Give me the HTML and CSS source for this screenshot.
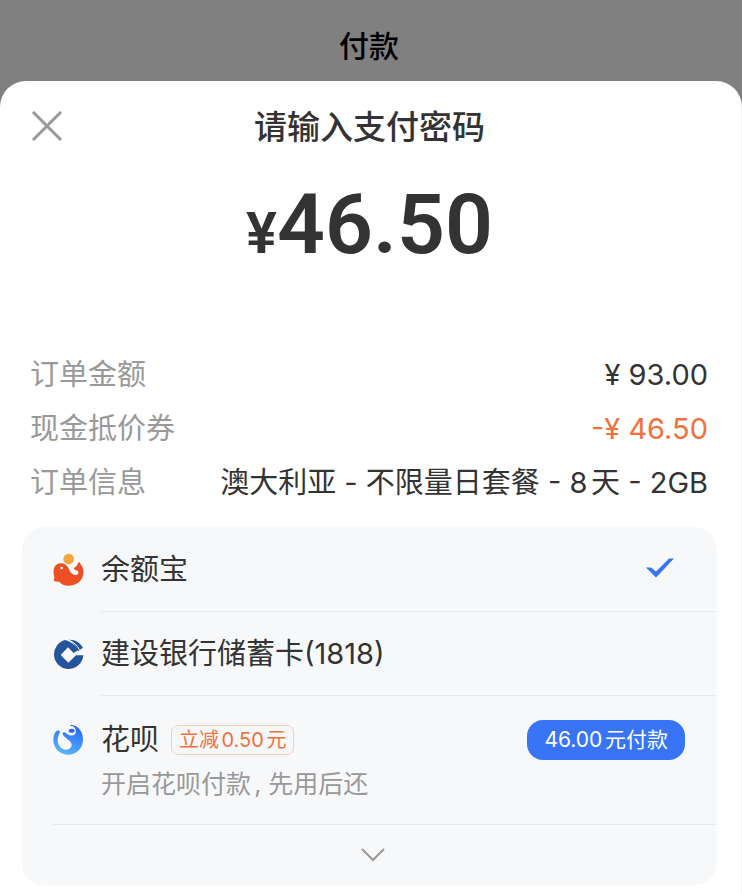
FILE: index.html
```html
<!DOCTYPE html>
<html lang="zh-CN">
<head>
    <title>付款</title>
    <meta charset="UTF-8" />
    <meta name="viewport" content="width=device-width, initial-scale=1">
    <link rel="stylesheet" href="styles.css">
</head>
<body>
    <header class="page-header">付款</header>

    <main class="sheet">
        <div class="sheet-header">
            <button class="close" type="button" aria-label="关闭">
                <svg width="32" height="32" viewBox="0 0 32 32">
                    <path d="M2 1L30 29M30 1L2 29" fill="none" stroke="#999" stroke-width="3"/>
                </svg>
            </button>
            <h1>请输入支付密码</h1>
        </div>

        <div class="amount"><span class="currency">¥</span>46.50</div>

        <dl class="details">
            <div class="detail">
                <dt>订单金额</dt>
                <dd>¥ 93.00</dd>
            </div>
            <div class="detail">
                <dt>现金抵价券</dt>
                <dd class="discount">-¥ 46.50</dd>
            </div>
            <div class="detail">
                <dt>订单信息</dt>
                <dd>澳大利亚 - 不限量日套餐 - 8天 - 2GB</dd>
            </div>
        </dl>

        <section class="methods">
            <div class="method">
                <svg class="logo" viewBox="39 24 96 102">
                    <circle cx="86" cy="42" r="16" fill="#f4a63a"/>
                    <path d="M42 70C46 57 58 53 70 56C83 60 86 70 90 79C95 89 108 94 114 87C118 81 113 76 106 75C100 73 101 68 106 66C112 63 112 56 117 51C121 52 121 59 125 62C130 68 131 77 130 87C128 108 109 122 86 122C73 122 63 117 57 110C50 111 44 110 41 106C43 102 43 99 43 96C40 87 40 78 42 70Z" fill="#ec4f24"/>
                    <circle cx="65" cy="69" r="4" fill="#fff"/>
                </svg>
                <div class="method-body">
                    <span class="method-name">余额宝</span>
                    <svg class="check" width="28" height="20" viewBox="0 0 28 20">
                        <path d="M0 9.500H5L10 13.500L23 0.500H28L10 19.500Z" fill="#3875f6"/>
                    </svg>
                </div>
            </div>

            <div class="method">
                <svg class="logo" viewBox="39 22 96 102">
                    <path d="M76 31A44 44 0 1 0 130 77H108L85 99L62 76L84 53L101 70L116 60C106 46 92 36 76 31Z" fill="#24549c"/>
                    <path d="M85 30C106 29 122 40 129 54L114 64C108 48 99 36 85 30Z" fill="#24549c"/>
                    <path d="M86 31C101 37 111 46 118 60" fill="none" stroke="#f7f8fa" stroke-width="3"/>
                </svg>
                <div class="method-body">
                    <span class="method-name">建设银行储蓄卡(1818)</span>
                </div>
            </div>

            <div class="method method-offer">
                <svg class="logo" viewBox="39 39 96 102">
                    <defs>
                        <linearGradient id="huabei" x1="0.700" y1="0" x2="0.400" y2="1">
                            <stop offset="0" stop-color="#2864f5"/>
                            <stop offset="1" stop-color="#57b5fb"/>
                        </linearGradient>
                    </defs>
                    <path d="M92 44C116 46 130 66 129 90C128 116 109 134 85 134C60 134 40 115 40 90C40 80 42 72 47 65C51 60 60 61 60 67C54 77 52 86 54 98C58 113 68 120 81 119C92 117 97 109 94 100C90 90 73 84 68 73C65 66 74 64 79 70C85 77 96 79 103 74C110 69 109 56 101 50C98 48 94 48 91 47Z" fill="url(#huabei)"/>
                    <ellipse cx="95" cy="62" rx="9" ry="6" fill="#2b68f5"/>
                </svg>
                <div class="method-body">
                    <div class="offer">
                        <div class="offer-title">
                            <span class="method-name">花呗</span>
                            <span class="tag">立减0.50元</span>
                        </div>
                        <p class="offer-note">开启花呗付款, 先用后还</p>
                    </div>
                    <button class="pay" type="button">46.00元付款</button>
                </div>
            </div>

            <button class="more" type="button" aria-label="更多付款方式">
                <svg width="24" height="14" viewBox="0 0 24 14">
                    <path d="M1 1L12 12L23 1" fill="none" stroke="#999" stroke-width="2"/>
                </svg>
            </button>
        </section>
    </main>
</body>
</html>
```
FILE: styles.css
```css
* {
    box-sizing: border-box;
}

body {
    margin: 0;
    min-height: 100vh;
    display: flex;
    flex-direction: column;
    background: #808080;
    color: #333;
    font-family: Inter, "Noto Sans CJK SC", sans-serif;
    font-size: 29px;
    line-height: 40px;
    text-autospace: normal;
}

button {
    border: none;
    background: none;
    padding: 0;
    font: inherit;
    cursor: pointer;
}

svg {
    display: block;
}

.page-header {
    padding: 26px 4px 15px 0;
    color: #000;
    font-size: 30px;
    font-weight: 500;
    text-align: center;
}

.sheet {
    flex: 1;
    padding: 24px 24px 8px 22px;
    background: #fff;
    border-right: 1px solid #f4f4f4;
    border-radius: 26px 26px 0 0;
}

.sheet-header {
    display: grid;
    grid-template-columns: 50px 1fr 50px;
    align-items: center;
}

.close {
    justify-self: center;
}

.sheet-header h1 {
    margin: 0;
    font-size: 33px;
    font-weight: 500;
    line-height: 44px;
    text-align: center;
}

.amount {
    padding-top: 26px;
    font-family: Roboto, sans-serif;
    font-size: 84px;
    font-weight: 600;
    line-height: 100px;
    text-align: center;
}

.currency {
    font-size: 58px;
}

.details {
    margin: 0;
    padding: 72px 9px 24px 8px;
    display: flex;
    flex-direction: column;
    gap: 14px;
}

.detail {
    display: flex;
    justify-content: space-between;
}

.detail dt {
    color: #999;
}

.detail dd {
    margin: 0;
}

.detail .discount {
    color: #f1703f;
}

.methods {
    padding-top: 1px;
    background: #f7f8fa;
    border-radius: 22px;
    overflow: hidden;
}

.method {
    display: flex;
    align-items: center;
    padding-left: 31px;
}

.logo {
    flex: none;
    width: 32px;
    height: 34px;
    margin-right: 16px;
}

.method-body {
    flex: 1;
    display: flex;
    align-items: center;
    justify-content: space-between;
    min-height: 84px;
    padding-right: 32px;
    border-bottom: 1px solid #e9eaec;
}

.check {
    margin: 0 11px 4px 0;
}

.method-offer {
    align-items: flex-start;
}

.method-offer .logo {
    margin-top: 27px;
}

.method-offer .method-body {
    align-items: flex-start;
    padding-top: 24px;
    padding-bottom: 20px;
    border-bottom: none;
}

.offer-title {
    display: flex;
    align-items: center;
    gap: 12px;
}

.tag {
    padding: 0 7px;
    border: 1px solid #f9cdb9;
    border-radius: 7px;
    color: #f1703f;
    font-size: 20px;
    line-height: 28px;
}

.offer-note {
    margin: 4px 0 0;
    color: #999;
    font-size: 25px;
}

.pay {
    padding: 0 17px;
    border-radius: 16px;
    background: #3875f6;
    color: #fff;
    font-size: 21px;
    line-height: 40px;
}

.more {
    display: flex;
    align-items: center;
    justify-content: center;
    width: calc(100% - 30px);
    height: 61px;
    margin-left: 30px;
    padding-right: 24px;
    border-top: 1px solid #e9eaec;
}
```
